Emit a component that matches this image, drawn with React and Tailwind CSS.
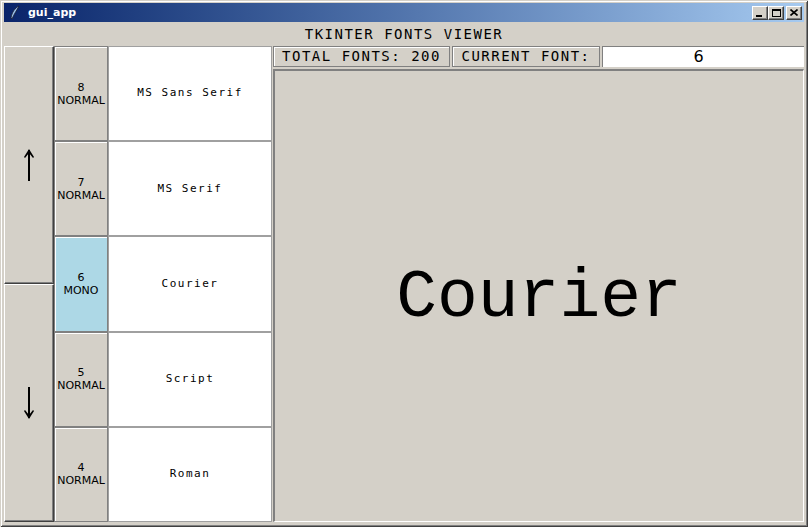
import React from 'react';

const rows = [
  { size: 8, style: 'NORMAL', name: 'MS Sans Serif' },
  { size: 7, style: 'NORMAL', name: 'MS Serif' },
  { size: 6, style: 'MONO', name: 'Courier', active: true },
  { size: 5, style: 'NORMAL', name: 'Script' },
  { size: 4, style: 'NORMAL', name: 'Roman' },
];

const mono = "font-['DejaVu_Sans_Mono',monospace]";
const sans = "font-['DejaVu_Sans',sans-serif]";

function Arrow({ down }) {
  return (
    <svg width="14" height="34" viewBox="0 0 14 34" className={down ? 'rotate-180' : ''}>
      <path d="M7 2 L7 33" stroke="#000" strokeWidth="2" fill="none" />
      <path d="M7 1 L2 9 L3 10 L7 5 L11 10 L12 9 Z" fill="#000" />
    </svg>
  );
}

function WinButton({ children }) {
  return (
    <div className="w-[16px] h-[14px] bg-[#d4d0c8] border-t border-l border-white border-r border-b border-r-[#404040] border-b-[#404040] shadow-[inset_-1px_-1px_0_#808080] flex items-center justify-center">
      {children}
    </div>
  );
}

export default function App() {
  return (
    <div className="w-[808px] h-[527px] bg-[#d4d0c8] shadow-[inset_1px_1px_0_#d4d0c8,inset_-1px_-1px_0_#404040,inset_2px_2px_0_#fff,inset_-2px_-2px_0_#808080] pt-[3px] px-[4px] flex flex-col overflow-hidden">
      {/* title bar */}
      <div className="h-[19px] bg-linear-to-r from-[#0a246a] to-[#a6caf0] flex items-center pl-[6px] pr-[2px]">
        <svg width="10" height="15" viewBox="0 0 10 15">
          <path d="M9 1 C5 3 2 7 1 13 L2 14 C4 9 7 5 9 1 Z" fill="#9cc4f0" stroke="#1a1a2a" strokeWidth="0.8" />
        </svg>
        <span className={`${sans} text-[11px] font-bold text-white ml-[8px] leading-none`}>gui_app</span>
        <div className="flex-1" />
        <div className="flex">
          <WinButton>
            <div className="w-[6px] h-[2px] bg-black mt-[6px] -ml-[2px]" />
          </WinButton>
          <WinButton>
            <div className="w-[9px] h-[8px] border border-black border-t-2" />
          </WinButton>
          <div className="w-[2px]" />
          <WinButton>
            <svg width="8" height="7" viewBox="0 0 8 7">
              <path d="M0.5 0.5 L7.5 6.5 M7.5 0.5 L0.5 6.5" stroke="#000" strokeWidth="1.6" />
            </svg>
          </WinButton>
        </div>
      </div>

      {/* header */}
      <div className={`${mono} h-[24px] flex items-center justify-center text-[14px] tracking-[1.5px] text-black`}>
        TKINTER FONTS VIEWER
      </div>

      {/* main */}
      <div className="h-[476px] flex">
        <div className="w-[50px] flex flex-col">
          <div className="h-[238px] border-t border-l border-white border-r border-b border-r-[#404040] border-b-[#404040] shadow-[inset_-1px_-1px_0_#808080] flex items-center justify-center">
            <Arrow />
          </div>
          <div className="h-[238px] border-t border-l border-white border-r border-b border-r-[#404040] border-b-[#404040] shadow-[inset_-1px_-1px_0_#808080] flex items-center justify-center">
            <Arrow down />
          </div>
        </div>

        <div className="w-[54px] flex flex-col">
          {rows.map((r) => (
            <div
              key={r.size}
              className={`flex-1 border border-[#808080] shadow-[inset_1px_1px_0_#fff] flex flex-col items-center justify-center ${sans} text-[11px] leading-[13px] text-black ${r.active ? 'bg-[#add8e6]' : 'bg-[#d4d0c8]'}`}
            >
              <span>{r.size}</span>
              <span>{r.style}</span>
            </div>
          ))}
        </div>

        <div className="w-[164px] flex flex-col">
          {rows.map((r) => (
            <div
              key={r.size}
              className={`flex-1 bg-white border border-[#a0a0a0] flex items-center justify-center ${mono} text-[11px] tracking-[1.5px] text-black`}
            >
              {r.name}
            </div>
          ))}
        </div>

        <div className="flex-1 ml-[1px] flex flex-col">
          <div className="h-[21px] flex gap-[2px]">
            <div className={`w-[177px] border border-[#808080] shadow-[inset_1px_1px_0_#fff] flex items-center justify-center ${mono} text-[14px] tracking-[1.5px]`}>
              TOTAL FONTS: 200
            </div>
            <div className={`w-[148px] border border-[#808080] shadow-[inset_1px_1px_0_#fff] flex items-center justify-center ${mono} text-[14px] tracking-[1.5px]`}>
              CURRENT FONT:
            </div>
            <div className={`flex-1 bg-white border-t border-l border-[#808080] flex items-center justify-center pr-[10px] ${sans} text-[16px]`}>
              6
            </div>
          </div>
          <div className="flex-1 mt-[2px] border-t-2 border-l-2 border-[#808080] border-r border-b border-r-white border-b-white flex items-center justify-center pt-[3px]">
            <span className="font-['Liberation_Mono',monospace] text-[68px] leading-none text-black">Courier</span>
          </div>
        </div>
      </div>
    </div>
  );
}
